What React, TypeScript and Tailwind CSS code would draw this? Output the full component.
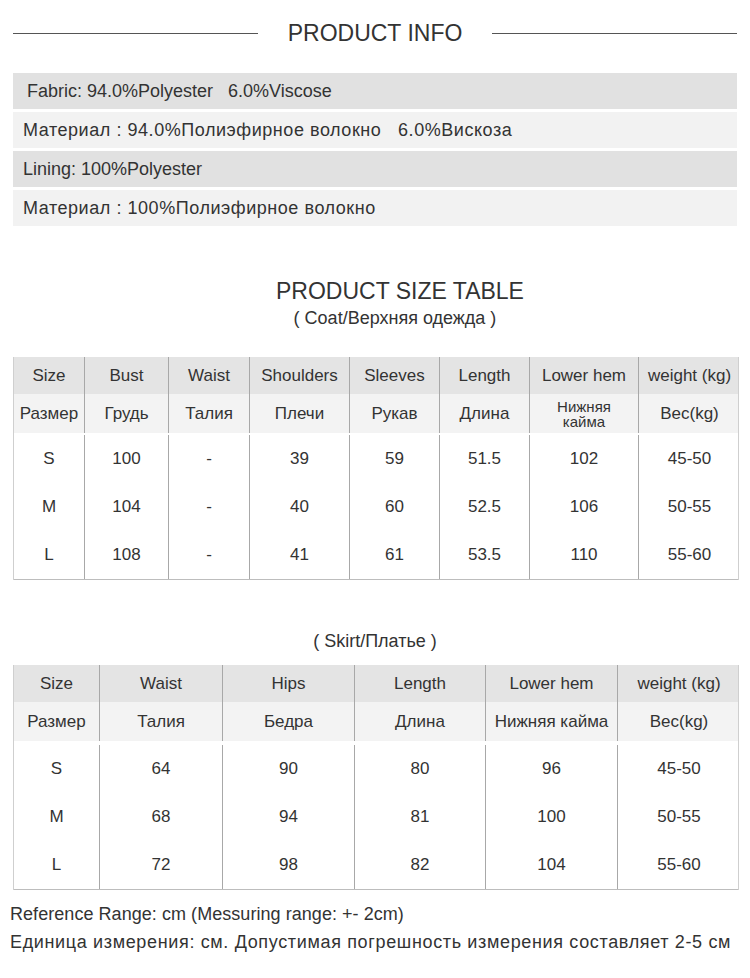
import React from 'react';

const coatCols = 'grid grid-cols-[70px_84px_81px_100px_90px_90px_109px_102px]';
const skirtCols = 'grid grid-cols-[85px_123px_132px_131px_132px_123px]';

const coatHead = ['Size', 'Bust', 'Waist', 'Shoulders', 'Sleeves', 'Length', 'Lower hem', 'weight (kg)'];
const coatHeadRu = ['Размер', 'Грудь', 'Талия', 'Плечи', 'Рукав', 'Длина', 'Нижняя\nкайма', 'Вес(kg)'];
const coatRows = [
  ['S', '100', '-', '39', '59', '51.5', '102', '45-50'],
  ['M', '104', '-', '40', '60', '52.5', '106', '50-55'],
  ['L', '108', '-', '41', '61', '53.5', '110', '55-60'],
];

const skirtHead = ['Size', 'Waist', 'Hips', 'Length', 'Lower hem', 'weight (kg)'];
const skirtHeadRu = ['Размер', 'Талия', 'Бедра', 'Длина', 'Нижняя кайма', 'Вес(kg)'];
const skirtRows = [
  ['S', '64', '90', '80', '96', '45-50'],
  ['M', '68', '94', '81', '100', '50-55'],
  ['L', '72', '98', '82', '104', '55-60'],
];

const info = [
  { text: 'Fabric: 94.0%Polyester\u00a0\u00a0\u00a06.0%Viscose', dark: true, cls: 'pl-[14px]' },
  { text: 'Материал : 94.0%Полиэфирное волокно\u00a0\u00a0\u00a06.0%Вискоза', dark: false, cls: 'pl-[10px] tracking-[0.55px]' },
  { text: 'Lining: 100%Polyester', dark: true, cls: 'pl-[10px]' },
  { text: 'Материал : 100%Полиэфирное волокно', dark: false, cls: 'pl-[10px] tracking-[0.55px]' },
];

export default function App() {
  return (
    <div className="w-[750px] h-[978px] bg-white text-[#333] overflow-hidden" style={{ fontFamily: '"Liberation Sans", Arial, sans-serif' }}>
      {/* Product info header */}
      <div className="mt-[19px] h-[28px] flex items-center px-[13px]">
        <div className="flex-1 h-px bg-[#555]" />
        <h1 className="px-[30px] text-[23px] leading-[28px] font-normal text-[#333]">PRODUCT INFO</h1>
        <div className="flex-1 h-px bg-[#555]" />
      </div>

      <div className="mt-[26px] mx-[13px] flex flex-col gap-[3px]">
        {info.map((row) => (
          <div key={row.text} className={`h-[36px] flex items-center ${row.cls} ${row.dark ? 'bg-[#e1e1e1]' : 'bg-[#f2f2f2]'}`}>
            <span className="text-[18px] text-[#333]">{row.text}</span>
          </div>
        ))}
      </div>

      {/* Size table */}
      <div className="mt-[50px] text-center">
        <h2 className="pl-[50px] text-[23px] leading-[30px] font-normal text-[#333]">PRODUCT SIZE TABLE</h2>
        <p className="pl-[40px] text-[18px] leading-[22px] mt-px">( Coat/Верхняя одежда )</p>
      </div>

      <div className="mt-[28px]">
        <SizeTable cols={coatCols} head={coatHead} headRu={coatHeadRu} rows={coatRows} dataPad="pt-[2px]" />
      </div>

      <p className="mt-[50px] text-center text-[18px] leading-[22px]">( Skirt/Платье )</p>

      <div className="mt-[13px]">
        <SizeTable cols={skirtCols} head={skirtHead} headRu={skirtHeadRu} rows={skirtRows} dataPad="pt-[4px]" />
      </div>

      <div className="mt-[10px] px-[10px] text-[#333]">
        <p className="text-[18px] leading-[28px] tracking-[0.05px]">Reference Range: cm (Messuring range: +- 2cm)</p>
        <p className="text-[18px] leading-[28px] tracking-[0.65px]">Единица измерения: см. Допустимая погрешность измерения составляет 2-5 см</p>
      </div>
    </div>
  );
}

function SizeTable({ cols, head, headRu, rows, dataPad }: { cols: string; head: string[]; headRu: string[]; rows: string[][]; dataPad: string }) {
  return (
    <div className="mx-[13px] w-[726px] border-l border-r border-[#cfcfcf]">
      <div className={`${cols} h-[37px] bg-[#e4e4e4]`}>
        {head.map((h, i) => (
          <div key={h} className={`flex items-center justify-center text-[17px] ${i > 0 ? 'border-l border-[#a8a8a8]' : ''}`}>{h}</div>
        ))}
      </div>
      <div className={`${cols} h-[39px] bg-[#f3f3f3]`}>
        {headRu.map((h, i) => (
          <div key={h} className={`flex items-center justify-center text-center ${h.includes('\n') ? 'text-[15px] leading-[15px] whitespace-pre-line' : 'text-[17px]'} ${i > 0 ? 'border-l border-[#a8a8a8]' : ''}`}>{h}</div>
        ))}
      </div>
      <div className={`${dataPad} border-b border-[#bdbdbd]`}>
        {rows.map((r) => (
          <div key={r[0]} className={`${cols} h-[48px]`}>
            {r.map((v, i) => (
              <div key={i} className={`flex items-center justify-center text-[17px] ${i > 0 ? 'border-l border-[#a8a8a8]' : ''}`}>{v}</div>
            ))}
          </div>
        ))}
      </div>
    </div>
  );
}
